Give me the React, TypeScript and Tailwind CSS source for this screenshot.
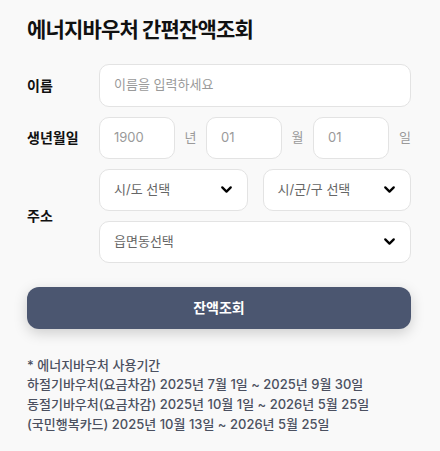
import React from 'react';
import { ChevronDown } from 'lucide-react';

const font = { fontFamily: 'Inter, "Noto Sans CJK KR", sans-serif' };

const Select = ({ label, className = '' }: { label: string; className?: string }) => (
  <div
    className={`flex h-[42px] items-center justify-between rounded-[10px] border border-[#e3e3e3] bg-white pl-[14px] pr-[12px] ${className}`}
  >
    <span className="text-[13px] text-[#666]">{label}</span>
    <ChevronDown size={17} strokeWidth={3.2} className="text-black" />
  </div>
);

const DateBox = ({ value }: { value: string }) => (
  <div className="flex h-[42px] w-[76px] items-center rounded-[10px] border border-[#e3e3e3] bg-white pl-[14px] text-[13px] text-[#9a9a9a]">
    {value}
  </div>
);

export default function App() {
  return (
    <div className="min-h-[451px] w-[440px] bg-[#f9f9f9] pl-[27px] pr-[29px] pt-[14px]" style={font}>
      <h1 className="text-[21px] font-bold tracking-[-0.04em] text-[#111]">에너지바우처 간편잔액조회</h1>

      <div className="mt-[18px] flex flex-col gap-[10px]">
        {/* 이름 */}
        <div className="flex items-center">
          <div className="w-[72px] text-[14px] font-bold text-[#111]">이름</div>
          <div className="flex h-[43px] flex-1 items-center rounded-[10px] border border-[#e3e3e3] bg-white pl-[14px] text-[13px] text-[#9a9a9a]">
            이름을 입력하세요
          </div>
        </div>

        {/* 생년월일 */}
        <div className="flex items-center">
          <div className="w-[72px] text-[14px] font-bold text-[#111]">생년월일</div>
          <DateBox value="1900" />
          <span className="w-[31px] text-center text-[13px] text-[#9a9a9a]">년</span>
          <DateBox value="01" />
          <span className="w-[31px] text-center text-[13px] text-[#9a9a9a]">월</span>
          <DateBox value="01" />
          <span className="flex-1 text-right text-[13px] text-[#9a9a9a]">일</span>
        </div>

        {/* 주소 */}
        <div className="flex items-center">
          <div className="w-[72px] text-[14px] font-bold text-[#111]">주소</div>
          <div className="flex flex-1 flex-col gap-[10px]">
            <div className="flex gap-[15px]">
              <Select label="시/도 선택" className="flex-1" />
              <Select label="시/군/구 선택" className="flex-1" />
            </div>
            <Select label="읍면동선택" />
          </div>
        </div>
      </div>

      <button className="mt-[24px] flex h-[42px] w-full items-center justify-center rounded-[12px] bg-[#4b5670] text-[14px] font-bold text-white shadow-[0_4px_14px_rgba(0,0,0,0.18)]">
        잔액조회
      </button>

      <div className="mt-[27px] text-[13px] font-medium leading-[19.7px] text-[#4b5060]">
        <p>* 에너지바우처 사용기간</p>
        <p>하절기바우처(요금차감) 2025년 7월 1일 ~ 2025년 9월 30일</p>
        <p>동절기바우처(요금차감) 2025년 10월 1일 ~ 2026년 5월 25일</p>
        <p>(국민행복카드) 2025년 10월 13일 ~ 2026년 5월 25일</p>
      </div>
    </div>
  );
}
